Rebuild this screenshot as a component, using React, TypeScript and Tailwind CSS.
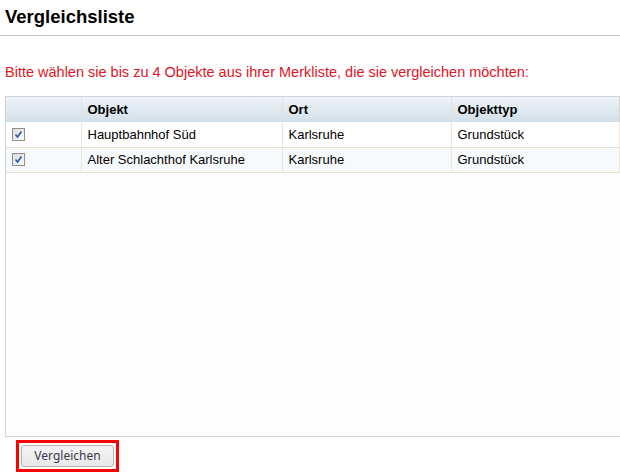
import React from 'react';

type Row = { objekt: string; ort: string; typ: string };

const rows: Row[] = [
  { objekt: 'Hauptbahnhof Süd', ort: 'Karlsruhe', typ: 'Grundstück' },
  { objekt: 'Alter Schlachthof Karlsruhe', ort: 'Karlsruhe', typ: 'Grundstück' },
];

const CheckBox: React.FC = () => (
  <span className="flex h-[13px] w-[13px] items-center justify-center border border-[#8e8f8f] bg-gradient-to-br from-[#dcdcdc] to-[#fafafa]">
    <svg viewBox="0 0 11 11" className="h-[11px] w-[11px]">
      <path d="M2.5 5.5 L4.5 8 L8.5 2.5" fill="none" stroke="#2b4fb6" strokeWidth={1.6} />
    </svg>
  </span>
);

const App: React.FC = () => {
  return (
    <div className="h-[474px] w-[620px] overflow-hidden bg-white font-['Liberation_Sans',Arial,sans-serif]">
      <div className="h-[36px] border-b border-[#c4c4c4] pl-[5px] pt-[6px]">
        <h1 className="text-[18.5px] font-bold leading-[22px] text-black">Vergleichsliste</h1>
      </div>

      <p className="mt-[28px] pl-[5px] text-[14.5px] leading-[16px] text-[#e2141f]">
        Bitte wählen sie bis zu 4 Objekte aus ihrer Merkliste, die sie vergleichen möchten:
      </p>

      <div className="ml-[5px] mt-[16px] h-[341px] w-[760px] border border-[#d4d4d4] bg-[#fdfdfd]">
        <table className="table-fixed border-collapse text-[13px] text-black">
          <colgroup>
            <col className="w-[75px]" />
            <col className="w-[201px]" />
            <col className="w-[169px]" />
            <col className="w-[168px]" />
            <col className="w-[140px]" />
          </colgroup>
          <thead>
            <tr className="h-[25px] bg-gradient-to-b from-[#eef3f8] to-[#d2dfe9]">
              <th />
              <th className="border-l border-[#e4e2dc] pl-[6px] text-left font-bold">Objekt</th>
              <th className="border-l border-[#e4e2dc] pl-[6px] text-left font-bold">Ort</th>
              <th className="border-l border-[#e4e2dc] pl-[6px] text-left font-bold">Objekttyp</th>
              <th className="border-l border-[#d8d2c6]" />
            </tr>
          </thead>
          <tbody>
            {rows.map((r, i) => (
              <tr
                key={r.objekt}
                className={`h-[25px] border-b border-[#e8dece] ${i % 2 === 1 ? 'bg-[#f7fafd]' : 'bg-white'}`}
              >
                <td className="pl-[6px]">
                  <CheckBox />
                </td>
                <td className="border-l border-[#ece4d6] pl-[6px]">{r.objekt}</td>
                <td className="border-l border-[#ece4d6] pl-[6px]">{r.ort}</td>
                <td className="border-l border-[#ece4d6] pl-[6px]">{r.typ}</td>
                <td className="border-l border-[#ece4d6]" />
              </tr>
            ))}
          </tbody>
        </table>
      </div>

      <div className="ml-[16px] mt-[3px] inline-block border-[3px] border-[#ff0000] p-[2px]">
        <button className="flex h-[22px] w-[93px] items-center justify-center rounded-[3px] border border-[#b4b4b4] bg-gradient-to-b from-[#f4f4f4] to-[#e8e8e8] font-['Noto_Sans',sans-serif] text-[12px] text-[#3a3a4a]">
          Vergleichen
        </button>
      </div>
    </div>
  );
};

export default App;
